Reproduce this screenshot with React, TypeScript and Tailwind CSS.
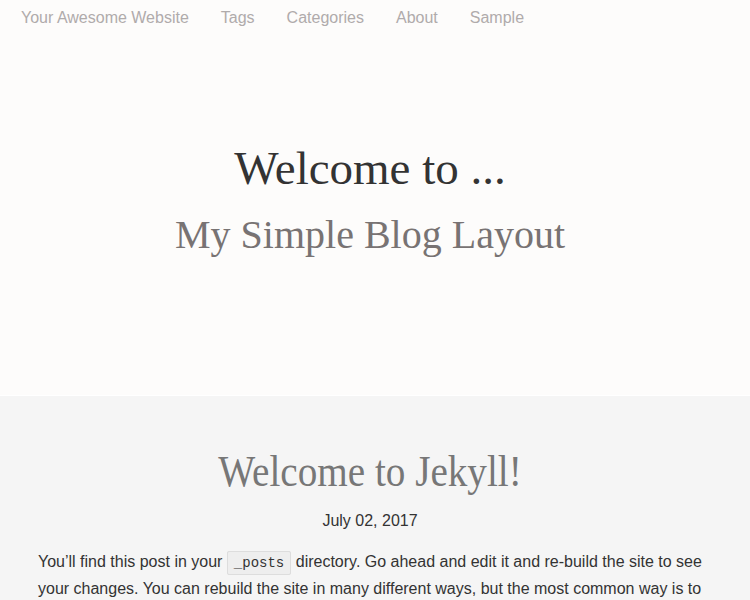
import React from 'react';

const navItems = ['Your Awesome Website', 'Tags', 'Categories', 'About', 'Sample'];

const Code: React.FC<{ children: React.ReactNode }> = ({ children }) => (
  <code className="font-['Liberation_Mono',monospace] text-[14px] text-[#333] bg-[#eeeeee] border border-[#dddddd] rounded-[2px] px-[6px] py-[3px]">
    {children}
  </code>
);

export default function App() {
  return (
    <div className="w-[750px] h-[600px] overflow-hidden font-['Liberation_Sans',Arial,sans-serif]">
      <header className="h-[396px] bg-[#fdfcfb] border-b border-white">
        <nav className="flex pl-[5px] pt-[8px] text-[16px] leading-[20px] text-[#b0abab]">
          {navItems.map((item) => (
            <a key={item} href="#" className="px-[16px]">
              {item}
            </a>
          ))}
        </nav>
        <div className="pr-[10px] text-center font-['Liberation_Serif','Times_New_Roman',serif]">
          <h1 className="mt-[117px] text-[47px] leading-[47px] text-[#333]">Welcome to ...</h1>
          <h2 className="mt-[23px] text-[40px] leading-[40px] text-[#787373]">My Simple Blog Layout</h2>
        </div>
      </header>

      <main className="bg-[#f5f5f5] h-[204px] px-[38px]">
        <div className="pr-[10px]">
          <h1 className="pt-[53px] text-center font-['Liberation_Serif','Times_New_Roman',serif] text-[45px] leading-[45px] text-[#777] scale-x-[0.87]">
            Welcome to Jekyll!
          </h1>
          <p className="mt-[15px] text-center text-[16px] leading-[24px] text-[#333]">July 02, 2017</p>
        </div>
        <p className="mt-[16px] text-[16px] leading-[26px] text-[#333]">
          You’ll find this post in your <Code>_posts</Code> directory. Go ahead and edit it and re-build the site to see
          your changes. You can rebuild the site in many different ways, but the most common way is to run{' '}
          <Code>jekyll serve</Code>, which launches a web server and auto-regenerates your site when a file is updated.
        </p>
      </main>
    </div>
  );
}
